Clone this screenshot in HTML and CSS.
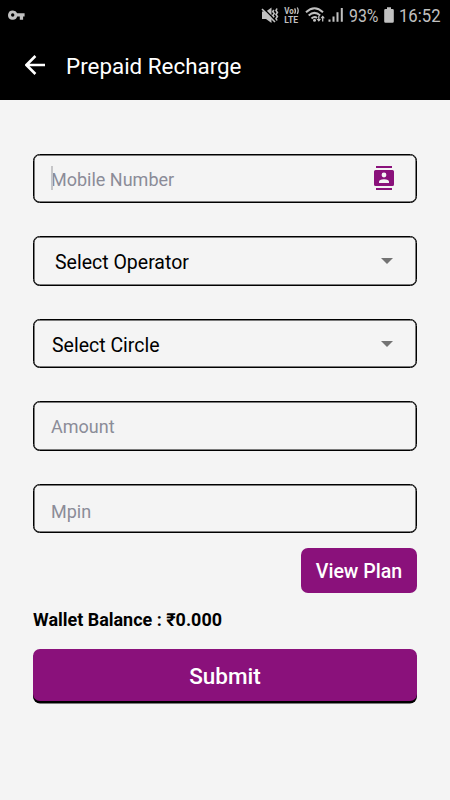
FILE: index.html
```html
<!DOCTYPE html>
<html lang="en">
<head>
    <meta charset="UTF-8">
    <meta name="viewport" content="width=device-width, initial-scale=1.0">
    <title>Prepaid Recharge</title>
    <link rel="stylesheet" href="styles.css">
</head>
<body>
    <header>
        <div class="status-bar">
            <svg class="key" width="18" height="12" viewBox="0 0 18 12">
                <path fill-rule="evenodd" d="M4.7 .4a4.7 4.7 0 1 0 4.5 6.2h2.6v3.1h3.3V6.6h1.5V3.2H9.2A4.7 4.7 0 0 0 4.7.4zm0 2.9a1.7 1.7 0 1 1 0 3.4 1.7 1.7 0 0 1 0-3.4z"/>
            </svg>
            <svg class="status-icons" width="190" height="32" viewBox="0 0 190 32">
                <!-- muted / vibrate -->
                <path d="M2 11.500h4l5.500-4v15.500L6 19H2z"/>
                <path class="cut" d="M3.500 8.500l12 12"/>
                <path class="line" d="M2 9l13 13"/>
                <path class="line" d="M13.800 10l-1 1.800 1.400 1.800-1.400 1.800 1.400 1.800M17 8.500l-1 2 1.400 2-1.400 2 1.400 2-1.400 2 1 2"/>
                <!-- network -->
                <text class="volte" x="24.300" y="14" textLength="9.500" lengthAdjust="spacingAndGlyphs">Vo</text>
                <path class="thin" d="M34.600 8.300q1.700 2.500 0 5.500M37.200 7.500q2 3 0 6.500"/>
                <text class="volte" x="24.300" y="22.600" textLength="13.800" lengthAdjust="spacingAndGlyphs">LTE</text>
                <!-- wifi -->
                <path class="wave" d="M46 12.200q8.500-8 17 0M48.700 15.500q5.800-5.300 11.500 0M51.500 18.500q3-2.700 5.500-.5"/>
                <circle cx="54.500" cy="20.200" r="1.500"/>
                <path class="thin" d="M58.800 16v5M62.700 21.500v-5"/>
                <path d="M56.600 19h4.400l-2.200 2.800zM60.500 18.300h4.400l-2.200-2.800z"/>
                <!-- signal -->
                <path d="M68.500 19.500h2v2.300h-2zM72.500 16.500h2v5.300h-2zM76.500 12.300h2v9.500h-2zM80.800 8h2v13.800h-2z"/>
                <text x="89" y="22" textLength="29.500" lengthAdjust="spacingAndGlyphs">93%</text>
                <!-- battery -->
                <path d="M125.500 9h1.500V7.300h4V9h1.500q1.300 0 1.300 1.300v11.200q0 1.300-1.300 1.300h-7q-1.300 0-1.300-1.300V10.300q0-1.300 1.300-1.300z"/>
                <text x="139" y="22" textLength="41.500" lengthAdjust="spacingAndGlyphs">16:52</text>
            </svg>
        </div>
        <div class="title-bar">
            <svg class="back" width="20" height="20" viewBox="0 0 20 20">
                <path d="M20 10H1.800M10.400 1L1.400 10l9 9"/>
            </svg>
            <h1>Prepaid Recharge</h1>
        </div>
    </header>

    <form>
        <div class="field active">
            <span class="placeholder">Mobile Number</span>
            <svg class="contacts" width="20" height="24" viewBox="0 0 20 24">
                <path fill-rule="evenodd" d="M2 0h16v1.900H2zM2 22.100h16V24H2zM1.600 4h16.800Q20 4 20 5.600v12.900q0 1.600-1.600 1.600H1.600Q0 20.100 0 18.500V5.600Q0 4 1.600 4zM10 6.600a2.400 2.400 0 1 0 0 4.800 2.400 2.400 0 0 0 0-4.800zM5 17h10v-1.200q0-2.500-5-2.500t-5 2.500z"/>
            </svg>
        </div>
        <div class="field select operator">
            <span>Select Operator</span>
            <i class="arrow"></i>
        </div>
        <div class="field select">
            <span>Select Circle</span>
            <i class="arrow"></i>
        </div>
        <div class="field">
            <span class="placeholder amount">Amount</span>
        </div>
        <div class="field">
            <span class="placeholder mpin">Mpin</span>
        </div>
        <button type="button" class="view-plan">View Plan</button>
        <p class="balance">Wallet Balance : ₹0.000</p>
        <button type="button" class="submit">Submit</button>
    </form>
</body>
</html>
```
FILE: styles.css
```css
* {
    box-sizing: border-box;
}
body {
    font-family: Roboto, "Noto Sans", sans-serif;
    background-color: #f4f4f4;
    color: #000;
    margin: 0;
    height: 800px;
    overflow: hidden;
}
header {
    background: #000;
    height: 100px;
}
.status-bar {
    display: flex;
    justify-content: space-between;
    height: 32px;
    padding-left: 8px;
    fill: #c1c1c1;
}
.key {
    margin-top: 10px;
}
.status-icons {
    font-size: 18.5px;
}
.status-icons .volte {
    font-size: 8.6px;
    font-weight: bold;
}
.line, .thin, .wave, .cut {
    fill: none;
    stroke: #c1c1c1;
    stroke-width: 1.6;
}
.thin {
    stroke-width: 1.3;
}
.wave {
    stroke-width: 2;
}
.cut {
    stroke: #000;
    stroke-width: 1.6;
}
.title-bar {
    display: flex;
    align-items: center;
    height: 66px;
    padding-left: 25px;
}
.back {
    fill: none;
    stroke: #fff;
    stroke-width: 2.6;
}
h1 {
    margin: 2px 0 0 21px;
    color: #fff;
    font-size: 22.4px;
    font-weight: 400;
}
form {
    display: flex;
    flex-direction: column;
    padding: 53.7px 33px 0;
}
.field {
    display: flex;
    align-items: center;
    justify-content: space-between;
    height: 49.4px;
    margin-bottom: 33.2px;
    padding: 0 22px 0 17px;
    border: 1px solid #000;
    border-radius: 6.5px;
    box-shadow: inset 0 0 0 0.5px #000;
    font-size: 18px;
}
.placeholder {
    color: #8b8c98;
    padding-top: 2px;
}
.amount {
    padding-top: 0;
}
.mpin {
    padding-top: 6px;
}
.active .placeholder {
    position: relative;
}
/* text cursor */
.active .placeholder::before {
    content: "";
    position: absolute;
    left: 0;
    top: -1px;
    width: 2px;
    height: 24px;
    background: #c6c6c8;
}
.contacts {
    fill: #8a117b;
}
.select {
    font-size: 19.5px;
    padding: 0 23px 0 18px;
}
.select span {
    padding-top: 3px;
}
.operator {
    padding-left: 21px;
}
.arrow {
    border: 6px solid transparent;
    border-top-color: #737373;
    border-bottom: 0;
}
button {
    border: none;
    border-radius: 7px;
    background: #8a117b;
    color: #fff;
    font-family: inherit;
    font-weight: 500;
}
.view-plan {
    align-self: flex-end;
    width: 116px;
    height: 45px;
    margin-top: -19px;
    padding: 3px 0 0;
    font-size: 19.6px;
}
.balance {
    margin: 16px 0 0;
    font-size: 17.95px;
    line-height: 22px;
    font-weight: 700;
}
.submit {
    height: 52px;
    margin-top: 18px;
    padding: 3px 0 0;
    font-size: 22.5px;
    box-shadow: 0 2.5px 0 #000;
}
```
